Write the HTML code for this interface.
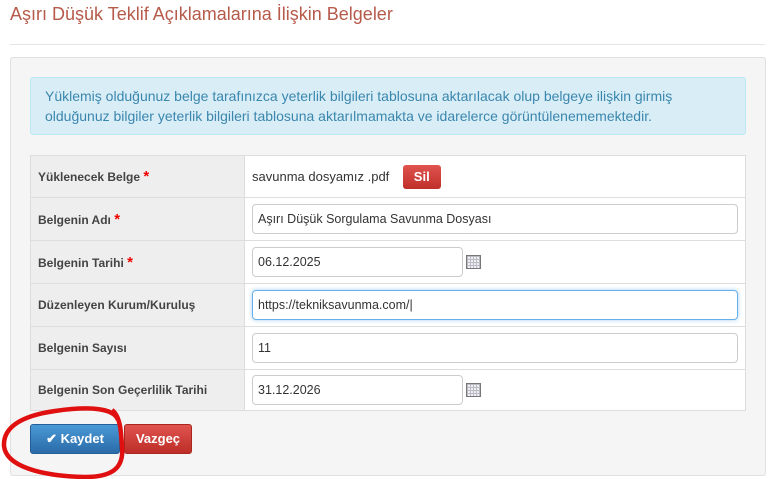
<!DOCTYPE html>
<html><head><meta charset="utf-8"><style>
*{box-sizing:border-box}
body{margin:0;width:769px;height:479px;background:#fff;font-family:"Liberation Sans",Arial,sans-serif;position:relative;overflow:hidden}
.t{position:absolute;left:10px;top:4px;font-size:18px;color:#b65a4a}
.hr{position:absolute;left:10px;right:4px;top:44px;border-top:1px solid #e5e5e5}
.panel{position:absolute;left:10px;top:57px;width:756px;height:419px;background:#f5f5f5;border:1px solid #e0e0e0;border-radius:3px}
.alert{position:absolute;left:30px;top:77px;width:716px;height:58px;background:#d9edf7;border:1px solid #bce8f1;border-radius:3px;color:#3a87ad;font-size:14px;line-height:20px;padding:8px 40px 8px 14px}
table{position:absolute;left:30px;top:155px;width:716px;border-collapse:collapse;background:#fff}
td{border:1px solid #ddd;font-size:12.5px;color:#333;padding:0 7px}
td.l{width:215px;background:#eee;font-weight:bold;color:#444;font-size:12px}
.s{color:#e00;font-size:15px}
.inp{height:30px;border:1px solid #ccc;border-radius:4px;padding:0 5px;font-size:12.5px;line-height:28px;color:#333;display:inline-block;vertical-align:middle}
.cal{display:inline-block;vertical-align:middle;width:15px;height:14px;margin-left:3px;border:1px solid #777;background:
linear-gradient(#bbb 1px,transparent 1px) 0 3px/100% 3px,linear-gradient(90deg,#bbb 1px,transparent 1px) 0 0/3px 100%;background-color:#eef}
.btn{position:absolute;color:#fff;font-weight:bold;font-size:13px;text-align:center;border-radius:3px;line-height:28px}
</style></head><body>
<div class="t">Aşırı Düşük Teklif Açıklamalarına İlişkin Belgeler</div>
<div class="hr"></div>
<div class="panel"></div>
<div class="alert">Yüklemiş olduğunuz belge tarafınızca yeterlik bilgileri tablosuna aktarılacak olup belgeye ilişkin girmiş<br>olduğunuz bilgiler yeterlik bilgileri tablosuna aktarılmamakta ve idarelerce görüntülenememektedir.</div>
<table>
<tr style="height:42px"><td class="l">Yüklenecek Belge <span class="s">*</span></td><td><span style="font-size:13px">savunma dosyamız .pdf</span> <span style="display:inline-block;margin-left:10px;background:linear-gradient(#e0534e,#c0302a);color:#fff;font-weight:bold;border-radius:3px;padding:0 11px;line-height:24px;font-size:13px">Sil</span></td></tr>
<tr style="height:43px"><td class="l">Belgenin Adı <span class="s">*</span></td><td><span class="inp" style="width:486px">Aşırı Düşük Sorgulama Savunma Dosyası</span></td></tr>
<tr style="height:43px"><td class="l">Belgenin Tarihi <span class="s">*</span></td><td><span class="inp" style="width:211px">06.12.2025</span><span class="cal"></span></td></tr>
<tr style="height:43px"><td class="l">Düzenleyen Kurum/Kuruluş</td><td><span class="inp" style="width:486px;border-color:#66afe9;box-shadow:0 0 4px rgba(102,175,233,.6)">https://tekniksavunma.com/|</span></td></tr>
<tr style="height:43px"><td class="l">Belgenin Sayısı</td><td><span class="inp" style="width:486px">11</span></td></tr>
<tr style="height:41px"><td class="l">Belgenin Son Geçerlilik Tarihi</td><td><span class="inp" style="width:211px">31.12.2026</span><span class="cal"></span></td></tr>
</table>
<div class="btn" style="left:30px;top:424px;width:90px;height:30px;background:linear-gradient(#4a9ad6,#2a6aa8);border:1px solid #255f98">✔ Kaydet</div>
<div class="btn" style="left:124px;top:424px;width:68px;height:30px;background:linear-gradient(#e0534e,#bd2e28);border:1px solid #a8281f">Vazgeç</div>
<svg style="position:absolute;left:0;top:0" width="769" height="479"><path d="M118,420 C114,408 90,406 55,411 C20,416 3,428 4,446 C6,466 40,476 85,477 C115,477 124,466 122,446 C121,430 120,416 112,410" fill="none" stroke="#e01010" stroke-width="4.5"/></svg>
</body></html>
